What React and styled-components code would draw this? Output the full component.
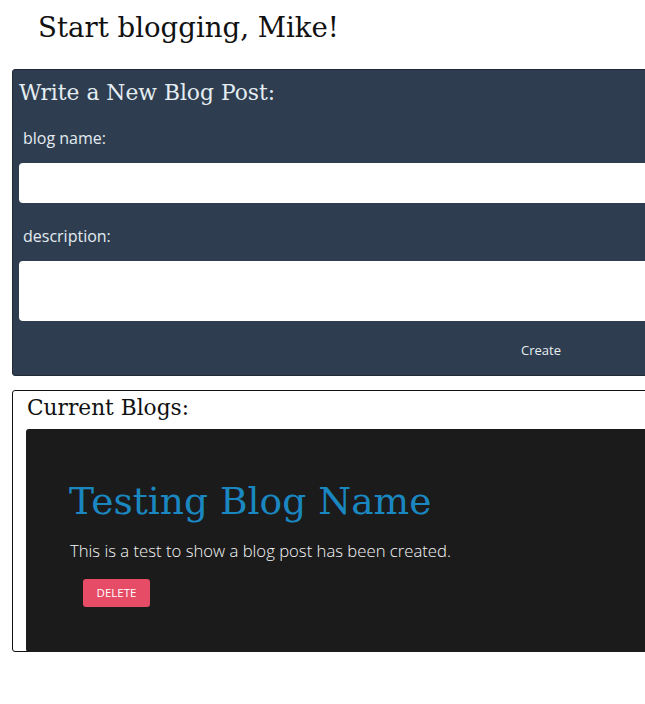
import React from "react";
import styled, { createGlobalStyle } from "styled-components";

const Global = createGlobalStyle`
  html, body { margin: 0; padding: 0; overflow: hidden; background: #ffffff; }
  body { font-family: "Open Sans", "Noto Sans", sans-serif; }
`;

const Page = styled.div`
  width: 700px;
  padding: 0 0 0 12px;
`;

const Greeting = styled.h1`
  margin: 0;
  padding: 8px 0 0 26px;
  height: 69px;
  box-sizing: border-box;
  font-family: "DejaVu Serif", Georgia, serif;
  font-weight: 400;
  font-size: 27.6px;
  line-height: 40px;
  color: #111;
`;

const FormPanel = styled.form`
  box-sizing: border-box;
  width: 680px;
  height: 307px;
  background: #2e3e50;
  border: 1px solid #1f2a36;
  border-radius: 3px;
  padding: 6px 0 0 6px;
  display: flex;
  flex-direction: column;
`;

const PanelTitle = styled.h2`
  margin: 0;
  font-family: "DejaVu Serif", Georgia, serif;
  font-weight: 400;
  font-size: 21.8px;
  line-height: 34px;
  color: #e4edf2;
`;

const Label = styled.label`
  display: block;
  margin: ${(p) => p.$top}px 0 0 4px;
  font-size: 16px;
  line-height: 22px;
  color: #e4ebf0;
`;

const TextInput = styled.input`
  display: block;
  box-sizing: border-box;
  width: 100%;
  height: 40px;
  margin-top: 14px;
  border: none;
  border-radius: 4px;
  background: #fff;
`;

const TextArea = styled.textarea`
  display: block;
  box-sizing: border-box;
  width: 100%;
  height: 60px;
  margin-top: 14px;
  border: none;
  border-radius: 4px;
  background: #fff;
  resize: none;
`;

const Actions = styled.div`
  display: flex;
  padding-left: 502px;
  margin-top: 19px;
`;

const CreateButton = styled.button`
  background: transparent;
  border: none;
  padding: 0;
  font-family: "Open Sans", "Noto Sans", sans-serif;
  font-size: 13px;
  line-height: 20px;
  color: #e8eef2;
  cursor: pointer;
`;

const BlogsBox = styled.section`
  box-sizing: border-box;
  width: 680px;
  height: 262px;
  margin-top: 14px;
  border: 1px solid #111;
  border-radius: 3px;
  padding: 0 0 0 13px;
  display: flex;
  flex-direction: column;
`;

const BoxTitle = styled.h2`
  margin: 0;
  padding-left: 1px;
  font-family: "DejaVu Serif", Georgia, serif;
  font-weight: 400;
  font-size: 21.7px;
  line-height: 34px;
  color: #111;
  height: 38px;
`;

const Card = styled.article`
  box-sizing: border-box;
  flex: 1;
  margin-bottom: -1px;
  background: #1b1b1b;
  border-radius: 3px 0 0 3px;
  padding: 46px 0 0 43px;
`;

const CardTitle = styled.h3`
  margin: 0;
  font-family: "DejaVu Serif", Georgia, serif;
  font-weight: 400;
  font-size: 37.6px;
  line-height: 52px;
  color: #1a87c0;
`;

const CardText = styled.p`
  margin: 13px 0 0 1px;
  font-family: "Open Sans", "Noto Sans", sans-serif;
  font-weight: 300;
  font-size: 16.7px;
  line-height: 22px;
  color: #f5f5f5;
`;

const DeleteButton = styled.button`
  display: block;
  margin: 17px 0 0 14px;
  width: 67px;
  height: 28px;
  border: none;
  border-radius: 3px;
  background: #e64c66;
  color: #fff;
  font-family: "Open Sans", "Noto Sans", sans-serif;
  font-size: 11.5px;
  font-weight: 500;
  line-height: 28px;
  padding: 0;
`;

export default function App() {
  return (
    <>
      <Global />
      <Page>
        <Greeting>Start blogging, Mike!</Greeting>
        <FormPanel onSubmit={(e) => e.preventDefault()}>
          <PanelTitle>Write a New Blog Post:</PanelTitle>
          <Label $top={17} htmlFor="blog-name">blog name:</Label>
          <TextInput id="blog-name" type="text" />
          <Label $top={22} htmlFor="blog-desc">description:</Label>
          <TextArea id="blog-desc" />
          <Actions>
            <CreateButton type="submit">Create</CreateButton>
          </Actions>
        </FormPanel>
        <BlogsBox>
          <BoxTitle>Current Blogs:</BoxTitle>
          <Card>
            <CardTitle>Testing Blog Name</CardTitle>
            <CardText>This is a test to show a blog post has been created.</CardText>
            <DeleteButton type="button">DELETE</DeleteButton>
          </Card>
        </BlogsBox>
      </Page>
    </>
  );
}
